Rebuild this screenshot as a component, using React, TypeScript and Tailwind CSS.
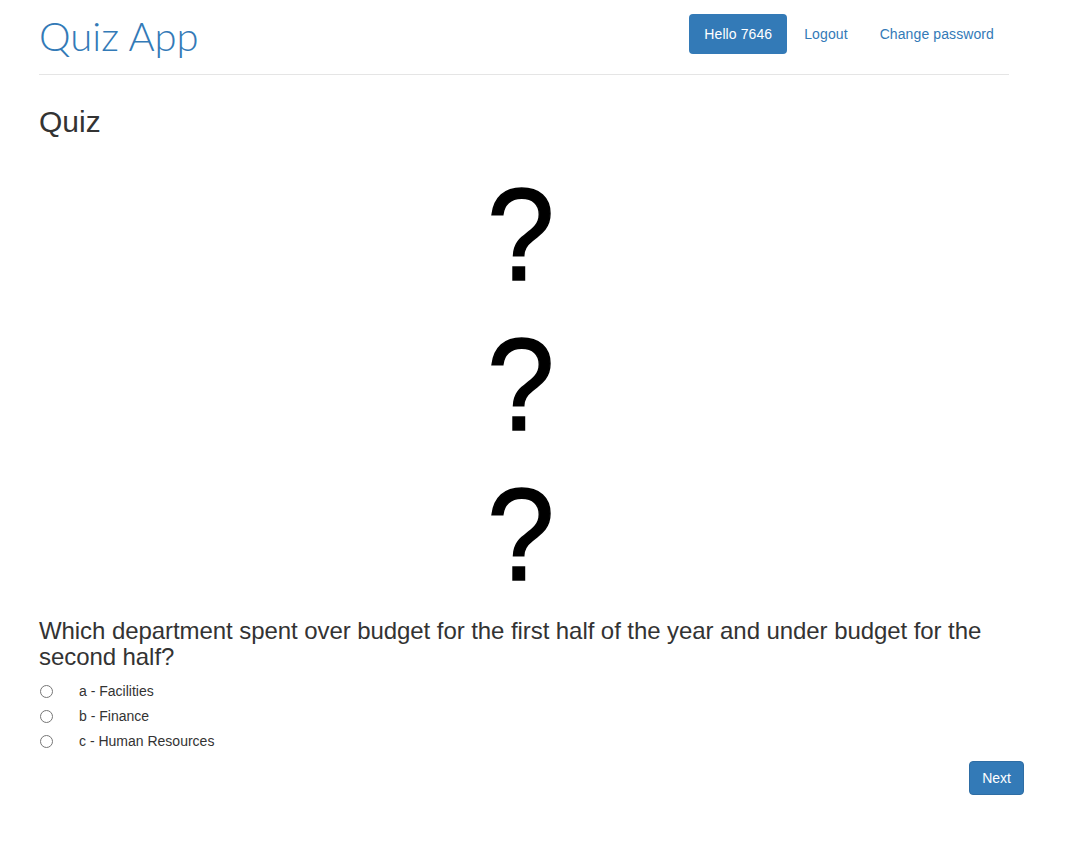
import { useState } from 'react';

const options = ['a - Facilities', 'b - Finance', 'c - Human Resources'];

function QuestionMark() {
  return (
    <div className="flex h-[150px] items-center justify-center pr-[6px]">
      <span
        className="inline-block scale-x-[0.92] text-[132px] leading-none text-black [-webkit-text-stroke:1.5px_black]"
        style={{ fontFamily: '"Liberation Sans", Arial, sans-serif' }}
      >
        ?
      </span>
    </div>
  );
}

export default function App() {
  const [answer, setAnswer] = useState<string | null>(null);

  return (
    <div className="min-h-screen bg-white text-[14px] text-[#333]" style={{ fontFamily: '"Liberation Sans", Arial, sans-serif' }}>
      <div className="w-[1000px] px-[15px] ml-[24px]">
        {/* header */}
        <div className="flex items-center justify-between border-b border-[#e5e5e5] h-[75px] w-[970px]">
          <span className="text-[40px] font-light text-[#337ab7] pb-[3px]" style={{ fontFamily: 'Lato, "Open Sans", sans-serif' }}>
            Quiz App
          </span>
          <nav className="flex items-center gap-[2px] pb-[7px] tracking-[0.1px]">
            <a className="rounded-[4px] bg-[#337ab7] px-[15px] py-[10px] leading-[20px] text-white">Hello 7646</a>
            <a className="px-[15px] py-[10px] leading-[20px] text-[#337ab7]">Logout</a>
            <a className="px-[15px] py-[10px] leading-[20px] text-[#337ab7]">Change password</a>
          </nav>
        </div>

        <h2 className="mt-[30px] text-[30px] leading-[33px]">Quiz</h2>

        <div className="mt-[22px] flex flex-col">
          <QuestionMark />
          <QuestionMark />
          <QuestionMark />
        </div>

        <h3 className="mt-[8px] text-[24px] leading-[26.4px] tracking-[-0.07px]">
          Which department spent over budget for the first half of the year and under budget for the second half?
        </h3>

        <div className="mt-[8px] flex flex-col">
          {options.map((o) => (
            <label key={o} className="flex h-[25px] items-center">
              <input
                type="radio"
                name="answer"
                checked={answer === o}
                onChange={() => setAnswer(o)}
                className="ml-[1px] h-[13px] w-[13px]"
              />
              <span className="ml-[26px]">{o}</span>
            </label>
          ))}
        </div>

        <div className="-mr-[15px] flex justify-end">
          <button className="mt-[7px] rounded-[4px] border border-[#2e6da4] bg-[#337ab7] px-[12px] py-[6px] leading-[20px] text-white">
            Next
          </button>
        </div>
      </div>
    </div>
  );
}
